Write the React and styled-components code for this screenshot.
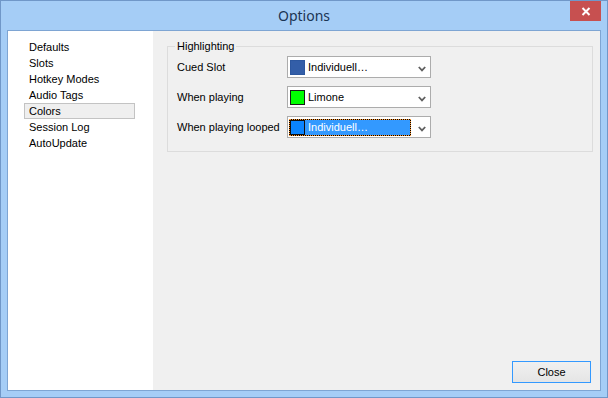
import React from 'react';
import styled, { createGlobalStyle } from 'styled-components';

const GlobalStyle = createGlobalStyle`
  html, body {
    margin: 0;
    padding: 0;
    background: #ffffff;
  }
  * {
    box-sizing: border-box;
  }
`;

const Window = styled.div`
  width: 608px;
  height: 398px;
  border: 1px solid #7097c8;
  background: #a5cdf6;
  display: flex;
  flex-direction: column;
  padding: 0 6px 6px;
  font-family: "Liberation Sans", Arial, sans-serif;
  font-size: 11px;
  color: #000;
`;

const TitleBar = styled.div`
  height: 29px;
  margin: 0 -6px;
  display: grid;
  grid-template-columns: 1fr auto 1fr;
  align-items: start;
`;

const Title = styled.div`
  grid-column: 2;
  font-family: "Noto Sans", "Open Sans", sans-serif;
  font-size: 14px;
  line-height: 29px;
  color: #1b3453;
`;

const CloseBox = styled.div`
  grid-column: 3;
  justify-self: end;
  margin-right: 6px;
  width: 31px;
  height: 20px;
  background: #c75050;
  display: flex;
  align-items: center;
  justify-content: center;
`;

const Client = styled.div`
  flex: 1;
  display: flex;
  border: 1px solid #7ea5d3;
  min-height: 0;
`;

const Sidebar = styled.div`
  width: 145px;
  background: #ffffff;
  padding-top: 8px;
  display: flex;
  flex-direction: column;
`;

const NavItem = styled.div`
  margin-left: 16px;
  width: 111px;
  height: 16px;
  padding-left: 4px;
  line-height: 14px;
  border: 1px solid ${p => (p.$active ? '#c3c3c3' : 'transparent')};
  background: ${p => (p.$active ? '#efefef' : 'transparent')};
`;

const Main = styled.div`
  flex: 1;
  background: #f0f0f0;
  display: flex;
  flex-direction: column;
  padding: 8px 7px 7px 14px;
`;

const Group = styled.fieldset`
  margin: 0;
  border: 1px solid #dcdcdc;
  padding: 0 7px 13px 7px;
  min-width: 0;
`;

const Legend = styled.legend`
  padding: 0 2px;
  line-height: 14px;
  height: 14px;
`;

const Rows = styled.div`
  margin-top: 3px;
  padding-left: 2px;
  display: flex;
  flex-direction: column;
  gap: 8px;
`;

const Row = styled.div`
  display: grid;
  grid-template-columns: 110px 144px;
  align-items: center;
`;

const Combo = styled.div`
  height: 22px;
  border: 1px solid #acacac;
  background: #ffffff;
  display: flex;
  align-items: flex-start;
  padding: 2px 0 0 1px;
`;

const Value = styled.div`
  width: 122px;
  height: 17px;
  display: flex;
  align-items: center;
  border: 1px solid transparent;
  border-left: 0;
  ${p =>
    p.$focused &&
    `
    border: 1px dotted #ff9933;
    background: linear-gradient(#3399ff, #3399ff) padding-box, #000 border-box;
    color: #ffffff;
  `}
`;

const Swatch = styled.span`
  width: 15px;
  height: 15px;
  margin-left: ${p => (p.$focused ? '0' : '1px')};
  border: 1px solid ${p => p.$edge};
  background: ${p => p.$color};
  flex: none;
`;

const ValueText = styled.span`
  margin-left: 3px;
  line-height: 15px;
  white-space: nowrap;
`;

const Arrow = styled.svg`
  margin: 7px 4px 0 auto;
  flex: none;
`;

const Footer = styled.div`
  margin-top: auto;
  display: flex;
  justify-content: flex-end;
  padding-right: 2px;
`;

const Button = styled.button`
  width: 79px;
  height: 22px;
  border: 1px solid #3399ff;
  background: linear-gradient(#f0f0f0, #e5e5e5);
  font-family: "Liberation Sans", Arial, sans-serif;
  font-size: 11px;
  color: #000;
  padding: 0;
  margin: 0;
`;

const navItems = ['Defaults', 'Slots', 'Hotkey Modes', 'Audio Tags', 'Colors', 'Session Log', 'AutoUpdate'];

const colorRows = [
  { label: 'Cued Slot', value: 'Individuell…', color: '#335ea8', edge: '#2c579f' },
  { label: 'When playing', value: 'Limone', color: '#00ff00', edge: '#1a1a1a' },
  { label: 'When playing looped', value: 'Individuell…', color: '#0a84ff', edge: '#111', focused: true },
];

const ChevronDown = () => (
  <Arrow width="8" height="6" viewBox="0 0 8 6">
    <path d="M0.8 1 L4 4.4 L7.2 1" fill="none" stroke="#5f5f5f" strokeWidth="1.8" />
  </Arrow>
);

export default function App() {
  return (
    <>
      <GlobalStyle />
      <Window>
        <TitleBar>
          <Title>Options</Title>
          <CloseBox>
            <svg width="10" height="9" viewBox="0 0 10 9">
              <path d="M1.5 1 L8.5 8 M8.5 1 L1.5 8" stroke="#fff" strokeWidth="2" />
            </svg>
          </CloseBox>
        </TitleBar>
        <Client>
          <Sidebar>
            {navItems.map(item => (
              <NavItem key={item} $active={item === 'Colors'}>{item}</NavItem>
            ))}
          </Sidebar>
          <Main>
            <Group>
              <Legend>Highlighting</Legend>
              <Rows>
                {colorRows.map(row => (
                  <Row key={row.label}>
                    <span>{row.label}</span>
                    <Combo>
                      <Value $focused={row.focused}>
                        <Swatch $color={row.color} $edge={row.edge} $focused={row.focused} />
                        <ValueText>{row.value}</ValueText>
                      </Value>
                      <ChevronDown />
                    </Combo>
                  </Row>
                ))}
              </Rows>
            </Group>
            <Footer>
              <Button>Close</Button>
            </Footer>
          </Main>
        </Client>
      </Window>
    </>
  );
}
